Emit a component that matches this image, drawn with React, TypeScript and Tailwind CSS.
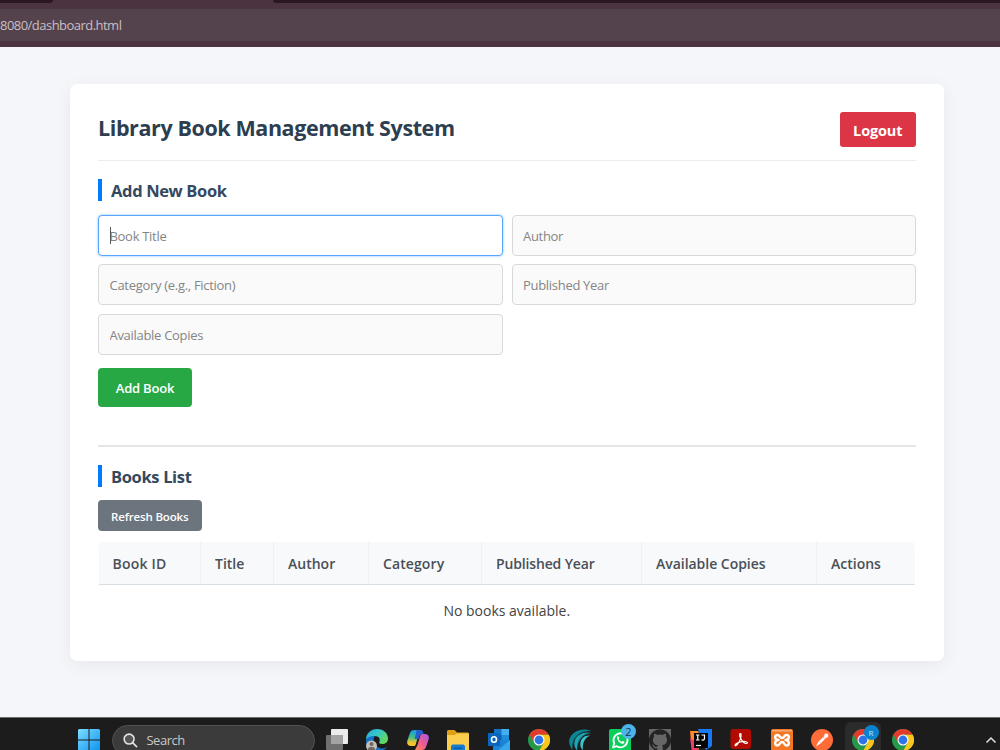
import type { ReactNode } from "react";

const columns = [
  { label: "Book ID", width: "w-[102.5px]", tracking: "tracking-[0.2px]" },
  { label: "Title", width: "w-[73px]", tracking: "tracking-[0px]" },
  { label: "Author", width: "w-[95px]", tracking: "tracking-[0px]" },
  { label: "Category", width: "w-[113px]", tracking: "tracking-[0.1px]" },
  { label: "Published Year", width: "w-[160px]", tracking: "tracking-[-0.15px]" },
  { label: "Available Copies", width: "w-[175px]", tracking: "tracking-[-0.03px]" },
  { label: "Actions", width: "w-[98px]", tracking: "tracking-[0px]" },
];

const fields = [
  { placeholder: "Book Title", focused: true },
  { placeholder: "Author" },
  { placeholder: "Category (e.g., Fiction)" },
  { placeholder: "Published Year" },
  { placeholder: "Available Copies" },
];

function Svg({ children }: { children: ReactNode }) {
  return (
    <svg viewBox="0 0 22 22" className="h-[22px] w-[22px] shrink-0">
      {children}
    </svg>
  );
}

function TaskViewIcon() {
  return (
    <Svg>
      <rect x="5" y="0" width="17" height="15" rx="1" fill="#ececec" />
      <rect x="0" y="6" width="17" height="15" rx="1" fill="#6f6f6f" />
      <path d="M5 6h12v9H5z" fill="#a3a3a3" />
    </Svg>
  );
}

function EdgeIcon() {
  return (
    <Svg>
      <defs>
        <linearGradient id="edge-top" x1="0" y1="0" x2="1" y2="0.6">
          <stop offset="0" stopColor="#2aa9e0" />
          <stop offset="0.5" stopColor="#35c7c9" />
          <stop offset="1" stopColor="#62d85a" />
        </linearGradient>
      </defs>
      <path d="M0 12C1 7 5 5.500 9 7 7 9 7 14 10 17c3 3 8 3 11 1-3 4-8 4.500-12 3.500C3 20 0 16 0 12z" fill="#1673c9" />
      <path d="M0 11C0 4 5 0 11 0c7 0 11 4.500 11 9.500 0 4-3 5.500-5.500 5.500-3 0-4-1.200-3-2.500 1-2.500-.5-5.500-5-5.500C4 7 1 8.500 0 11z" fill="url(#edge-top)" />
      <circle cx="5.500" cy="17" r="5.500" fill="#c5bfba" />
      <circle cx="5.500" cy="15" r="2" fill="#6f6865" />
      <path d="M2 20c.5-3 6.500-3 7 0v2H2z" fill="#6f6865" />
    </Svg>
  );
}

function CopilotIcon() {
  return (
    <Svg>
      <defs>
        <linearGradient id="cop-l" x1="0" y1="0" x2="0" y2="1">
          <stop offset="0" stopColor="#1b94e8" />
          <stop offset="0.45" stopColor="#43bf86" />
          <stop offset="0.8" stopColor="#f3c52b" />
        </linearGradient>
        <linearGradient id="cop-r" x1="1" y1="0" x2="0" y2="1">
          <stop offset="0" stopColor="#a05be8" />
          <stop offset="0.5" stopColor="#ee5a98" />
          <stop offset="1" stopColor="#fb8a4d" />
        </linearGradient>
      </defs>
      <path d="M7 1h7l-2.500 5-2.800 9.500c-.3 1-1.200 1.500-2.200 1.500H4c-3 0-4.500-2-3.600-5.500L3 4c.7-2 2-3 4-3z" fill="url(#cop-l)" />
      <path d="M15 21H8l2.500-5 2.800-9.500c.3-1 1.200-1.500 2.200-1.500H18c3 0 4.500 2 3.600 5.500L19 18c-.7 2-2 3-4 3z" fill="url(#cop-r)" />
      <path d="M9.500 1h4c1.500 0 2.200.8 2.600 2.200l.6 1.800h-1.500c-1.600 0-2.300.9-2.800 2.500L11.500 10H7.500L9 4z" fill="#2260d2" />
    </Svg>
  );
}

function FolderIcon() {
  return (
    <Svg>
      <path d="M0 2.500C0 1.700.7 1 1.500 1h6L10 3.500h10.500c.8 0 1.500.7 1.500 1.500v5H0z" fill="#dda017" />
      <path d="M0 6h8l2-1.500h12V22H0z" fill="#fcce50" />
      <path d="M4 22v-4.500c0-1 .8-2 2-2h10c1.200 0 2 1 2 2V22z" fill="#137ccf" />
      <path d="M7 18.500h8V20H7z" fill="#0b5da7" />
    </Svg>
  );
}

function OutlookIcon() {
  return (
    <Svg>
      <path d="M6 0h15v12H6z" fill="#1273c4" />
      <path d="M13.500 0H21v6h-7.500z" fill="#42b0f0" />
      <path d="M6 6h7.500v6H6z" fill="#0c59a4" />
      <path d="M13.500 6H21v6h-7.500z" fill="#1e8cdc" />
      <path d="M5 11h17v11H5z" fill="#1a83d5" />
      <path d="M22 11v11H9z" fill="#37a6eb" />
      <rect x="0" y="4" width="12" height="13" rx="1" fill="#0a66bd" />
      <ellipse cx="6" cy="10.500" rx="2.500" ry="2.800" fill="none" stroke="#fff" strokeWidth="1.600" />
    </Svg>
  );
}

function ChromeIcon() {
  return (
    <Svg>
      <circle cx="11" cy="11" r="11" fill="#27984a" />
      <path d="M11 5.500h9.530A11 11 0 0 1 11 22l4.760-8.250z" fill="#fbc61b" />
      <path d="M1.470 5.500A11 11 0 0 1 20.530 5.500H11l-4.760 8.250z" fill="#e23b2e" />
      <circle cx="11" cy="11" r="5.500" fill="#fff" />
      <circle cx="11" cy="11" r="4.400" fill="#2f73e8" />
    </Svg>
  );
}

function SwooshIcon() {
  return (
    <Svg>
      <path d="M22 2C14-2 3 2 .5 10c-1 4 .5 8 3 11-.5-4 0-8 3-12C10 4 15 2 22 2z" fill="#0b8794" />
      <path d="M22 4C15 2 8 6 6 11c-1.500 4-.5 7.500 2 10.500C8 17 9 13.500 11.500 10 14 6.500 17 4.800 22 4z" fill="#1ba7b2" />
      <path d="M21 6.500c-5-.5-8.500 2.500-9.500 6.500-.7 3.500 0 6 2.500 8-.5-4 0-7 1.500-9.500 1.300-2.300 3-4 5.500-5z" fill="#3cc3c9" />
      <path d="M4 19C2.500 11 8 4 17 2M9 19.500C8 12 12 6.500 19 4.500" fill="none" stroke="#164750" strokeWidth=".7" />
    </Svg>
  );
}

function WhatsAppIcon() {
  return (
    <Svg>
      <rect width="22" height="24" rx="2" fill="#08cf5b" />
      <path d="M4 18.500l1.200-4.200a7 7 0 1 1 2.600 2.900z" fill="none" stroke="#fff" strokeWidth="1.800" strokeLinejoin="round" />
      <path d="M8.200 7.600c.5-.6 1.200-.5 1.500.1l.6 1.300c.1.500-.6 1-.6 1.300.6 1.200 1.500 2 2.800 2.500.5 0 .9-1 1.300-.9l1.400.7c.7.400.2 1.600-.6 2-2.800 1.200-7.400-3.300-6.400-7z" fill="#fff" />
    </Svg>
  );
}

function GithubIcon() {
  return (
    <Svg>
      <rect width="22" height="22" fill="#666" />
      <path
        transform="scale(.9167)"
        d="M12 .3a12 12 0 0 0-3.800 23.400c.6.100.8-.3.800-.6v-2c-3.300.7-4-1.600-4-1.600-.6-1.400-1.400-1.800-1.400-1.800-1-.7.100-.7.100-.7 1.200 0 1.900 1.200 1.900 1.200 1 1.800 2.800 1.300 3.500 1 0-.8.400-1.300.7-1.600-2.700-.3-5.500-1.300-5.500-6 0-1.200.5-2.300 1.300-3.100-.2-.4-.6-1.600 0-3.200 0 0 1-.3 3.400 1.200a11.500 11.500 0 0 1 6 0c2.300-1.500 3.300-1.200 3.300-1.200.6 1.600.2 2.800 0 3.200.9.800 1.300 1.900 1.300 3.200 0 4.600-2.800 5.600-5.500 5.900.5.400.9 1 .9 2.200v3.300c0 .3.100.7.800.6A12 12 0 0 0 12 .3"
        fill="#242424"
      />
    </Svg>
  );
}

function IntelliJIcon() {
  return (
    <Svg>
      <path d="M0 2h8l4 8-4 12H2z" fill="#fe8a2c" />
      <path d="M0 9l8 5v8H2z" fill="#ef3c68" />
      <path d="M8 0h14v17l-6 4-4-8z" fill="#1679f6" />
      <rect x="4" y="4" width="14" height="15" fill="#050505" />
      <path d="M6 6h3.500M7.750 6v5M6 11h3.500M11.500 6h3v3.500c0 1.300-1.500 2-3 1.300" fill="none" stroke="#fff" strokeWidth="1.200" />
      <path d="M6 16.500h5" stroke="#fff" strokeWidth="1.200" />
    </Svg>
  );
}

function AcrobatIcon() {
  return (
    <Svg>
      <rect x="0.500" width="20.500" height="20" rx="3" fill="#b30b00" />
      <path d="M10.500 4.500c-1.300 0-1 2.200 0 4.500 1.500 3.200 4 5.500 6 5.500 1.500 0 1.300-1.800-1.500-2-3.500-.2-6.500.8-8.500 2-2 1.300-1.600 2.600-.5 2 2-1 4.500-5.500 5-9 .1-2 .2-3-.5-3z" fill="none" stroke="#fff" strokeWidth="1.200" />
    </Svg>
  );
}

function XamppIcon() {
  return (
    <Svg>
      <rect width="22" height="22" rx="2" fill="#f37623" />
      <path d="M1 1h20v1.500H1z" fill="#f7ad7b" />
      <path
        d="M7.500 11C3.500 11 3 6 6.500 6 9 6 8.500 9 11 9s2-3 4.500-3C19 6 18.500 11 14.500 11c4 0 4.500 5.500 1 5.500-2.500 0-2-3.500-4.500-3.500s-2 3.500-4.500 3.500C3 16.500 3.500 11 7.500 11z"
        fill="none"
        stroke="#fff"
        strokeWidth="2.500"
        strokeLinejoin="round"
      />
    </Svg>
  );
}

function PostmanIcon() {
  return (
    <Svg>
      <circle cx="11" cy="11" r="11" fill="#ff6c37" />
      <path d="M5 17.500l2.500-5 6-5.500 1.700 1.700-5.700 5.800z" fill="#fff" />
      <circle cx="15.300" cy="6.700" r="2.100" fill="#fff" />
      <path d="M8 12.500l2 2M12 8.500l2 2" stroke="#ff8f68" strokeWidth=".7" />
    </Svg>
  );
}

function TaskItem({ children, active }: { children: ReactNode; active?: boolean }) {
  return (
    <div
      className={
        active
          ? "relative flex h-10 w-[36px] shrink-0 justify-center rounded-t-md bg-[#2b2b2b] pt-[7px]"
          : "relative flex h-10 w-[36px] shrink-0 justify-center pt-[11px]"
      }
    >
      {children}
    </div>
  );
}

function Taskbar() {
  return (
    <footer className="flex h-[33px] shrink-0 overflow-hidden border-t border-[#6d6d70] bg-[#1c1c1c] pr-[3px] pl-[78.400px]">
      <svg viewBox="0 0 22 22" className="mt-[11px] h-[22px] w-[22px] shrink-0">
        <defs>
          <linearGradient id="win" x1="0" y1="0" x2="1" y2="1">
            <stop offset="0" stopColor="#7fdcff" />
            <stop offset="1" stopColor="#0b93f0" />
          </linearGradient>
        </defs>
        <path d="M1 0h9.500v10.500H0V1zM11.500 0H21l1 1v9.500H11.500zM0 11.500h10.500V22H0zM11.500 11.500H22V22H11.500z" fill="url(#win)" />
      </svg>
      <div className="mt-[7px] ml-[12px] flex h-[31px] w-[202.500px] shrink-0 items-center rounded-full border border-[#525252] bg-[#3b3b3b] pl-[10px]">
        <svg viewBox="0 0 16 16" className="h-[15px] w-[15px]" fill="#555" stroke="#e2e2e8" strokeWidth="1.700" strokeLinecap="round">
          <circle cx="6.500" cy="6.500" r="5.300" />
          <path d="M10.500 10.500l4 4" />
        </svg>
        <span className="ml-[8px] text-[13px] tracking-[-0.45px] text-[#c8c8c8]">Search</span>
      </div>
      <div className="ml-[4px] flex gap-[4.450px]">
        <TaskItem><TaskViewIcon /></TaskItem>
        <TaskItem><EdgeIcon /></TaskItem>
        <TaskItem><CopilotIcon /></TaskItem>
        <TaskItem><FolderIcon /></TaskItem>
        <TaskItem><OutlookIcon /></TaskItem>
        <TaskItem><ChromeIcon /></TaskItem>
        <TaskItem><SwooshIcon /></TaskItem>
        <TaskItem>
          <WhatsAppIcon />
          <span className="absolute top-[6px] left-[19px] flex h-[15px] w-[15px] items-center justify-center rounded-full bg-[#4cb4ea] text-[11px] leading-none text-[#17364a]">
            2
          </span>
        </TaskItem>
        <TaskItem><GithubIcon /></TaskItem>
        <TaskItem><IntelliJIcon /></TaskItem>
        <TaskItem><AcrobatIcon /></TaskItem>
        <TaskItem><XamppIcon /></TaskItem>
        <TaskItem><PostmanIcon /></TaskItem>
        <div className="pt-[4px]">
          <TaskItem active>
            <ChromeIcon />
            <span className="absolute top-[3px] left-[19px] flex h-[15px] w-[15px] items-center justify-center rounded-full bg-[#0b84cf] text-[8px] leading-none text-[#b9e4ff]">
              R
            </span>
          </TaskItem>
        </div>
        <TaskItem><ChromeIcon /></TaskItem>
      </div>
      <svg viewBox="0 0 12 8" className="mt-[18px] ml-auto h-[8px] w-[12px]" fill="none" stroke="#e0e0e0" strokeWidth="1.500">
        <path d="M1.500 6.500 6 2l4.500 4.500" />
      </svg>
    </footer>
  );
}

function BrowserBar() {
  return (
    <header className="h-[47px] shrink-0 bg-[#4b3440]">
      <div className="flex h-[3px] justify-between">
        <div className="w-[53px] rounded-br-[4px] bg-[#2b1722]" />
        <div className="w-[727px] rounded-bl-[4px] bg-[#2b1722]" />
      </div>
      <div className="mt-[6px] flex h-[32px] items-center bg-[#54424c]">
        <span className="text-[13px] leading-none tracking-[-0.53px] text-[#c9bfc5]">8080/dashboard.html</span>
      </div>
    </header>
  );
}

function SectionTitle({ children }: { children: ReactNode }) {
  return (
    <h2 className="h-[22px] border-l-4 border-[#007bff] pl-[9px] text-[16.500px] leading-[24px] font-bold tracking-[-0.35px] text-[#34495e]">
      {children}
    </h2>
  );
}

export default function App() {
  return (
    <div className="flex h-[750px] w-full flex-col overflow-hidden bg-[#f4f6fa] font-['Open_Sans','Noto_Sans',sans-serif]">
      <BrowserBar />
      <main className="flex-1 pt-[37px] pr-14 pl-[70px]">
        <div className="h-[577px] rounded-[7px] bg-white px-7 pt-7 shadow-[0_4px_18px_rgba(0,0,0,0.06)]">
          <div className="flex h-[49px] items-start justify-between border-b-[1.500px] border-[#ececec]">
            <h1 className="text-[21.500px] leading-[31px] font-bold tracking-[-0.400px] whitespace-nowrap text-[#2c3e50]">
              Library Book Management System
            </h1>
            <button className="h-[34.500px] w-[76.500px] rounded-[3px] bg-[#dc3545] pt-[3px] text-[14.500px] font-bold tracking-[-0.15px] text-white">
              Logout
            </button>
          </div>

          <section className="pt-[18px]">
            <SectionTitle>Add New Book</SectionTitle>
            <form className="mt-[14px] grid grid-cols-2 gap-x-[9px] gap-y-[8.700px]">
              {fields.map((field) => (
                <div key={field.placeholder} className="relative h-[40.800px]">
                  <input
                    placeholder={field.placeholder}
                    className={
                      field.focused
                        ? "h-full w-full rounded-[4px] border border-[#55a7fb] bg-white px-[10.500px] pt-px text-[13px] tracking-[-0.3px] shadow-[0_0_2px_1px_rgba(0,123,255,0.22)] outline-none placeholder:text-[#858585]"
                        : "h-full w-full rounded-[4px] border border-[#d9d9d9] bg-[#fafafa] px-[10.500px] pt-px text-[13px] tracking-[-0.3px] outline-none placeholder:text-[#858585]"
                    }
                  />
                  {field.focused && <span className="absolute top-[12px] left-[12px] h-[17px] w-px bg-[#555]" />}
                </div>
              ))}
            </form>
            <button className="mt-[13px] block h-[39px] w-[94px] rounded-[4px] bg-[#28a745] pt-[2px] text-[13px] font-semibold tracking-[-0.2px] text-white">
              Add Book
            </button>
          </section>

          <hr className="mt-[38px] border-0 border-t-2 border-[#e4e5e6]" />

          <section className="pt-[18px]">
            <SectionTitle>Books List</SectionTitle>
            <button className="mt-[13.500px] block h-[31px] w-[103.500px] rounded-[4px] bg-[#6c757d] pt-[2px] text-[11.500px] font-semibold tracking-[-0.150px] text-white">
              Refresh Books
            </button>
            <table className="mt-[10.700px] ml-[0.500px] w-[816.500px] table-fixed border-separate border-spacing-0">
              <thead>
                <tr className="h-[43px]">
                  {columns.map((col) => (
                    <th
                      key={col.label}
                      className={`${col.width} ${col.tracking} border-r border-b-[1.500px] border-r-[#eef0f2] border-b-[#d6dee3] bg-[#f8f9fb] p-0 pt-[2px] pl-[14px] text-left text-[14px] font-semibold whitespace-nowrap text-[#495057] first:rounded-tl-[4px] last:rounded-tr-[4px] last:border-r-0`}
                    >
                      {col.label}
                    </th>
                  ))}
                </tr>
              </thead>
              <tbody>
                <tr className="h-[50px]">
                  <td colSpan={7} className="p-0 pt-px text-center text-[14px] text-[#444]">
                    No books available.
                  </td>
                </tr>
              </tbody>
            </table>
          </section>
        </div>
      </main>
      <Taskbar />
    </div>
  );
}
